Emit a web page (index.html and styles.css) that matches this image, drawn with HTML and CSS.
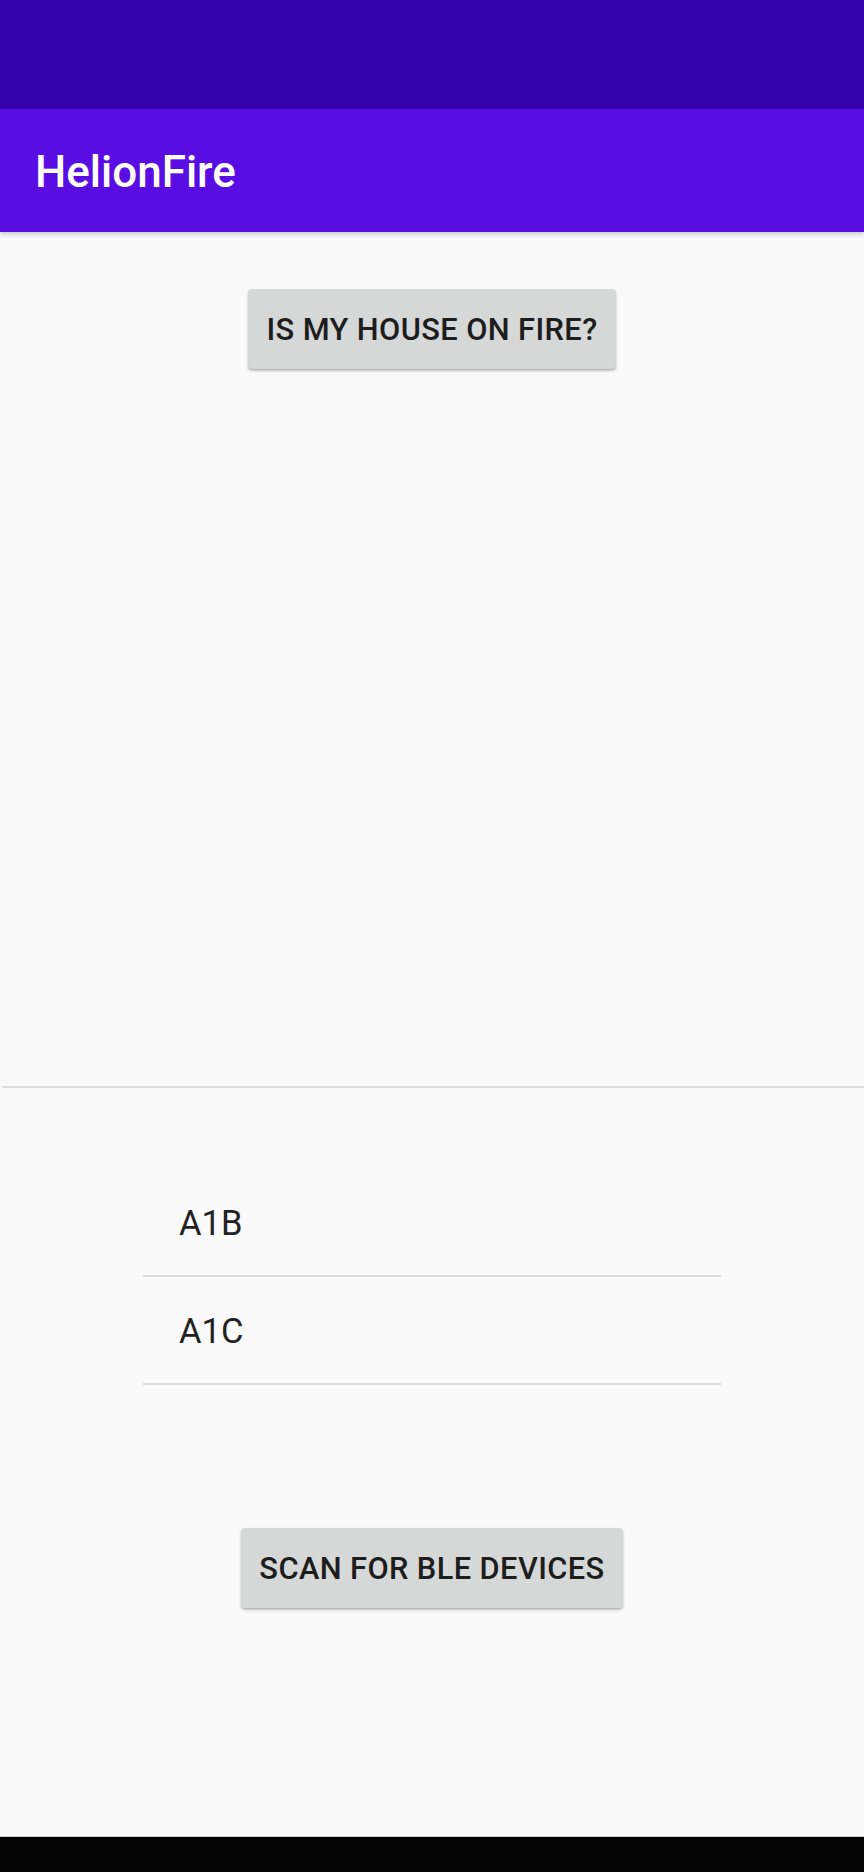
FILE: index.html
```html
<!DOCTYPE html>
<html>
<head>
<meta charset="utf-8">
<link rel="stylesheet" href="styles.css">
</head>
<body>
<div class="screen">
  <div class="status-bar"></div>
  <header class="app-bar"><h1 class="title">HelionFire</h1></header>
  <main class="main">
    <section class="top-panel">
      <button class="btn">IS MY HOUSE ON FIRE?</button>
    </section>
    <div class="divider"></div>
    <section class="bottom-panel">
      <ul class="device-list">
        <li class="device-item">A1B</li>
        <li class="device-item">A1C</li>
      </ul>
      <button class="btn btn-scan">SCAN FOR BLE DEVICES</button>
    </section>
  </main>
  <div class="nav-bar"></div>
</div>
</body>
</html>
```

FILE: styles.css
```css
* { box-sizing: border-box; }
html, body { margin: 0; padding: 0; }
body { background: #fafafa; font-family: Roboto, "Noto Sans", sans-serif; }
.screen { width: 864px; height: 1872px; display: flex; flex-direction: column; background: #fafafa; overflow: hidden; }
.status-bar { height: 109px; background: #3302ab; flex: none; }
.app-bar { height: 123px; background: #5a0de3; flex: none; display: flex; align-items: center; padding-left: 35px; box-shadow: 0 2px 5px rgba(0,0,0,0.22); position: relative; z-index: 1; }
.title { margin: 0; color: #fff; font-size: 44px; font-weight: 500; letter-spacing: 0; padding-top: 3px; }
.main { flex: 1; display: flex; flex-direction: column; }
.top-panel { height: 854px; display: flex; justify-content: center; align-items: flex-start; padding-top: 57px; }
.btn { height: 80px; padding: 0 18px; border: none; border-radius: 4px; background: #d6d7d7; color: #1d1d1d; font-family: Roboto, sans-serif; font-size: 30.8px; font-weight: 500; letter-spacing: 0.4px; box-shadow: 0 2px 3px rgba(0,0,0,0.22), 0 1px 1px rgba(0,0,0,0.1); }
.divider { height: 2px; margin-left: 2px; background: #dcdcdc; flex: none; }
.bottom-panel { display: flex; flex-direction: column; align-items: center; padding-top: 81px; }
.device-list { list-style: none; margin: 0; padding: 0; width: 578px; }
.device-item { height: 108px; display: flex; align-items: center; padding-left: 36px; padding-top: 2px; border-bottom: 2px solid #dcdcdc; font-size: 34.5px; color: #222; }
.btn-scan { margin-top: 143px; }
.nav-bar { height: 36px; background: #030303; border-top: 1px solid #cfcfcf; flex: none; }
```
